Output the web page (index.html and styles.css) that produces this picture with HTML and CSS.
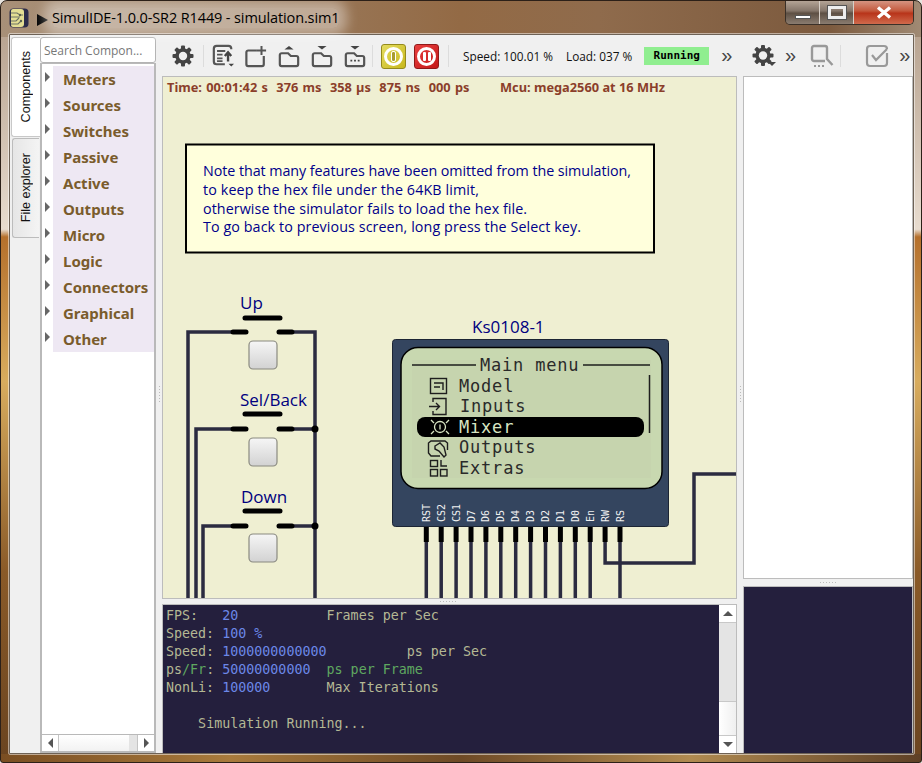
FILE: index.html
```html
<!DOCTYPE html>
<html lang="en">
  <head>
    <meta charset="UTF-8" />
    <title>SimulIDE-1.0.0-SR2 R1449 - simulation.sim1</title>
    <link rel="stylesheet" href="styles.css">
  </head>
  <body>
    <div class="window">
      <header class="titlebar">
        <svg class="app-icon" width="20" height="20" viewBox="0 0 20 20">
          <rect x="0.500" y="0.500" width="19" height="19" rx="4" fill="#2c2c4a"/>
          <path d="M2 3a2 2 0 0 1 2-2h8q3 0 3 3v12q0 3-3 3H4a2 2 0 0 1-2-2z" fill="#e4de94"/>
          <path d="M2 5h6l3 2h3M2 9h9M2 13h5l3-3M2 16h7l3-3" fill="none" stroke="#6e7466" stroke-width="1.100"/>
          <circle cx="11" cy="7" r="1.200" fill="#5a6050"/>
          <circle cx="12" cy="13" r="1.200" fill="#5a6050"/>
        </svg>
        <span class="play"></span>
        <span class="title">SimulIDE-1.0.0-SR2 R1449 - simulation.sim1</span>
        <div class="win-controls">
          <div class="win-btn min"><span class="min-glyph"></span></div>
          <div class="win-btn max"><span class="max-glyph"></span></div>
          <div class="win-btn close">
            <svg width="16" height="13" viewBox="0 0 16 13"><path d="M2 1.500L14 11.500M14 1.500L2 11.500" stroke="#fff" stroke-width="3.400" fill="none"/></svg>
          </div>
        </div>
      </header>

      <div class="client">
        <nav class="side-tabs">
          <div class="side-tab active"><span>Components</span></div>
          <div class="side-tab"><span>File explorer</span></div>
        </nav>

        <aside class="components">
          <input class="search" placeholder="Search Compon..." />
          <div class="tree">
            <ul class="tree-list">
              <li>Meters</li>
              <li>Sources</li>
              <li>Switches</li>
              <li>Passive</li>
              <li>Active</li>
              <li>Outputs</li>
              <li>Micro</li>
              <li>Logic</li>
              <li>Connectors</li>
              <li>Graphical</li>
              <li>Other</li>
            </ul>
            <div class="hscroll">
              <div class="hscroll-btn"><span class="arrow-left"></span></div>
              <div class="hscroll-thumb"></div>
              <div class="hscroll-track"></div>
              <div class="hscroll-btn end"><span class="arrow-right"></span></div>
            </div>
          </div>
        </aside>

        <div class="vsplit"><span class="vdots"></span></div>

        <main class="center">
          <div class="toolbar">
            <svg class="icon first" width="24" height="24" viewBox="0 0 24 24">
              <g fill="#444">
                <rect x="10" y="1.500" width="4" height="21" rx="1"/>
                <rect x="10" y="1.500" width="4" height="21" rx="1" transform="rotate(45 12 12)"/>
                <rect x="10" y="1.500" width="4" height="21" rx="1" transform="rotate(90 12 12)"/>
                <rect x="10" y="1.500" width="4" height="21" rx="1" transform="rotate(135 12 12)"/>
              </g>
              <circle cx="12" cy="12" r="6" fill="none" stroke="#444" stroke-width="3.400"/>
              <circle cx="12" cy="12" r="4.200" fill="#f0f0f0"/>
            </svg>
            <span class="sep"></span>
            <svg class="icon" width="22" height="24" viewBox="0 0 24 24">
              <path d="M21 4.500V4a3 3 0 0 0-3-3H5a3 3 0 0 0-3 3v14a3 3 0 0 0 3 3h9" fill="none" stroke="#555" stroke-width="2.400"/>
              <path d="M5.500 6.500h9M5.500 10.500h6M5.500 14.500h6M5.500 17.500h6" stroke="#555" stroke-width="2"/>
              <path d="M17.500 18V8M14 12l3.500-4 3.500 4" fill="none" stroke="#444" stroke-width="2.600"/>
              <path d="M18 20.500h6l-3 3z" fill="#444"/>
            </svg>
            <svg class="icon" width="22" height="24" viewBox="0 0 24 24">
              <path d="M13 6H3.500A2 2 0 0 0 1.500 8v13a2 2 0 0 0 2 2h15a2 2 0 0 0 2-2v-9" fill="none" stroke="#555" stroke-width="2.400"/>
              <path d="M18 1v10M13 6h10" stroke="#555" stroke-width="2.200"/>
            </svg>
            <svg class="icon" width="22" height="24" viewBox="0 0 24 24">
              <path d="M9 9H4a2 2 0 0 0-2 2v10a2 2 0 0 0 2 2h16a2 2 0 0 0 2-2v-7a2 2 0 0 0-2-2h-6l-3-3z" fill="none" stroke="#555" stroke-width="2.400"/>
              <path d="M12 1l5 4H7z" fill="#444"/>
            </svg>
            <svg class="icon" width="22" height="24" viewBox="0 0 24 24">
              <path d="M9 9H4a2 2 0 0 0-2 2v10a2 2 0 0 0 2 2h16a2 2 0 0 0 2-2v-7a2 2 0 0 0-2-2h-6l-3-3z" fill="none" stroke="#555" stroke-width="2.400"/>
              <path d="M7 1h10l-5 4z" fill="#444"/>
            </svg>
            <svg class="icon last" width="22" height="24" viewBox="0 0 24 24">
              <path d="M9 9H4a2 2 0 0 0-2 2v10a2 2 0 0 0 2 2h16a2 2 0 0 0 2-2v-7a2 2 0 0 0-2-2h-6l-3-3z" fill="none" stroke="#555" stroke-width="2.400"/>
              <path d="M7 1h10l-5 4z" fill="#444"/>
              <path d="M7 17h2M11 17h2M15 17h2" stroke="#444" stroke-width="2"/>
            </svg>
            <span class="sep"></span>
            <div class="power yellow"><span class="ring"><span class="ring-bar"></span></span></div>
            <div class="power red"><span class="ring"><span class="ring-bar"></span><span class="ring-bar"></span></span></div>
            <span class="sep sep-c"></span>
            <span class="stat">Speed: 100.01 %</span>
            <span class="stat load">Load: 037 %</span>
            <span class="badge">Running</span>
            <span class="more">&raquo;</span>
          </div>

          <div class="canvas">
            <svg class="circuit" viewBox="163 77 573 521" width="573" height="521">
              <text class="status time" x="167" y="92">Time: 00:01:42 s&#160;&#160;376 ms&#160;&#160;358 µs&#160;&#160;875 ns&#160;&#160;000 ps</text>
              <text class="status" x="500" y="92">Mcu: mega2560 at 16 MHz</text>

              <rect x="186" y="144.500" width="468" height="108" fill="#ffffdc" stroke="#000" stroke-width="2"/>
              <text class="note" x="203" y="176" textLength="428">Note that many features have been omitted from the simulation,</text>
              <text class="note" x="203" y="195" textLength="276">to keep the hex file under the 64KB limit,</text>
              <text class="note" x="203" y="214" textLength="324">otherwise the simulator fails to load the hex file.</text>
              <text class="note" x="203" y="232" textLength="378">To go back to previous screen, long press the Select key.</text>

              <!-- wires -->
              <g class="wire">
                <path d="M188 598V332H232M294 332H315V598"/>
                <path d="M196 598V429H232M294 429H315"/>
                <path d="M203 598V526H232M294 526H315"/>
                <path d="M426.300 540V598M441.200 540V598M456.100 540V598M471 540V598M485.900 540V598M500.800 540V598M515.700 540V598M530.600 540V598M545.500 540V598M560.400 540V598M575.300 540V598M590.200 540V598M620 540V598"/>
                <path d="M605.100 540V563H694V474H736"/>
              </g>

              <!-- push buttons -->
              <g class="sw">
                <path d="M245 318H280M233 332H246M279 332H292"/>
                <path d="M245 414H280M233 429H246M279 429H292"/>
                <path d="M245 511H280M233 526H246M279 526H292"/>
              </g>
              <circle cx="315" cy="429" r="3.500" fill="#000"/>
              <circle cx="315" cy="526" r="3.500" fill="#000"/>
              <defs>
                <linearGradient id="keyFill" x1="0" y1="0" x2="0" y2="1">
                  <stop offset="0" stop-color="#f6f6f6"/>
                  <stop offset="1" stop-color="#d2d2d2"/>
                </linearGradient>
              </defs>
              <rect class="key" x="249" y="341" width="28" height="28" rx="4"/>
              <rect class="key" x="249" y="438" width="28" height="28" rx="4"/>
              <rect class="key" x="249" y="534" width="28" height="28" rx="4"/>
              <text class="label" x="240" y="309">Up</text>
              <text class="label" x="240" y="406">Sel/Back</text>
              <text class="label" x="241" y="503">Down</text>
              <text class="label" x="472" y="333">Ks0108-1</text>

              <!-- display -->
              <g stroke="#000" stroke-width="5">
                <path d="M426.300 527V542M441.200 527V542M456.100 527V542M471 527V542M485.900 527V542M500.800 527V542M515.700 527V542M530.600 527V542M545.500 527V542M560.400 527V542M575.300 527V542M590.200 527V542M605.100 527V542M620 527V542"/>
              </g>
              <rect x="392.500" y="339.500" width="276" height="187" rx="3" fill="#34455f" stroke="#1c2534"/>
              <rect x="401" y="347.500" width="261" height="141" rx="17" fill="#c8d8b0" stroke="#000" stroke-width="1.500"/>
              <rect x="412" y="360" width="239" height="118" fill="#c6d4ae"/>
              <path d="M412 365H476M583 365H650M649.500 375V433" stroke="#1e1e1e" stroke-width="1.500" fill="none"/>
              <rect x="417" y="417" width="227" height="20" rx="8" fill="#000"/>
              <text class="lcd" x="480" y="371">Main menu</text>
              <text class="lcd" x="459" y="392">Model</text>
              <text class="lcd" x="460" y="412">Inputs</text>
              <text class="lcd inv" x="459" y="433">Mixer</text>
              <text class="lcd" x="459" y="453">Outputs</text>
              <text class="lcd" x="459" y="474">Extras</text>
              <g fill="none" stroke="#1e1e1e" stroke-width="1.400">
                <rect x="430.500" y="378.500" width="16" height="15"/>
                <path d="M434 383H443V390M434 387H440"/>
                <path d="M433 402V398.500H446V414.500H433V411M429 406.500H439M436 403L439.500 406.500L436 410"/>
                <path d="M440 456H431L428.500 453V443L431 441H445L447.500 443V450M435 446L440 443L444 447L446 455L444 457L439 451L435 449Z"/>
                <rect x="430.500" y="460.500" width="7" height="6"/>
                <path d="M441 460V466H447"/>
                <rect x="430.500" y="469.500" width="7" height="6.500"/>
                <rect x="440.500" y="469.500" width="6.500" height="6.500"/>
              </g>
              <g fill="none" stroke="#d8e4c2" stroke-width="1.300">
                <circle cx="440" cy="427" r="5.500"/>
                <path d="M440 424.500V429.500M431 420L434 423M449 420L446 423M431 434L434 431M449 434L446 431"/>
              </g>
              <text class="pin" transform="translate(429.800 522) rotate(-90)">RST</text>
              <text class="pin" transform="translate(444.700 522) rotate(-90)">CS2</text>
              <text class="pin" transform="translate(459.600 522) rotate(-90)">CS1</text>
              <text class="pin" transform="translate(474.500 522) rotate(-90)">D7</text>
              <text class="pin" transform="translate(489.400 522) rotate(-90)">D6</text>
              <text class="pin" transform="translate(504.300 522) rotate(-90)">D5</text>
              <text class="pin" transform="translate(519.200 522) rotate(-90)">D4</text>
              <text class="pin" transform="translate(534.100 522) rotate(-90)">D3</text>
              <text class="pin" transform="translate(549 522) rotate(-90)">D2</text>
              <text class="pin" transform="translate(563.900 522) rotate(-90)">D1</text>
              <text class="pin" transform="translate(578.800 522) rotate(-90)">D0</text>
              <text class="pin" transform="translate(593.700 522) rotate(-90)">En</text>
              <text class="pin" transform="translate(608.600 522) rotate(-90)">RW</text>
              <text class="pin" transform="translate(623.500 522) rotate(-90)">RS</text>
            </svg>
          </div>

          <div class="hsplit"><span class="hdots"></span></div>

          <div class="console-wrap">
            <pre class="console"><span class="k">FPS:</span>   <span class="v">20</span>           <span class="k">Frames per Sec</span>
<span class="k">Speed:</span> <span class="v">100 %</span>
<span class="k">Speed:</span> <span class="v">1000000000000</span>          <span class="k">ps per Sec</span>
<span class="k">ps</span><span class="g">/Fr</span><span class="k">:</span> <span class="v">50000000000</span>  <span class="g">ps per Frame</span>
<span class="k">NonLi:</span> <span class="v">100000</span>       <span class="k">Max Iterations</span>

    <span class="k">Simulation Running...</span></pre>
            <div class="vscroll">
              <div class="vscroll-btn"><span class="arrow-up"></span></div>
              <div class="vscroll-track"></div>
              <div class="vscroll-thumb"></div>
              <div class="vscroll-btn"><span class="arrow-down"></span></div>
            </div>
          </div>
        </main>

        <div class="vsplit"><span class="vdots"></span></div>

        <section class="right">
          <div class="toolbar right-bar">
            <svg class="icon" width="26" height="26" viewBox="0 0 26 26">
              <g fill="#444">
                <rect x="10" y="2" width="4" height="21" rx="1"/>
                <rect x="10" y="2" width="4" height="21" rx="1" transform="rotate(45 12 12.500)"/>
                <rect x="10" y="2" width="4" height="21" rx="1" transform="rotate(90 12 12.500)"/>
                <rect x="10" y="2" width="4" height="21" rx="1" transform="rotate(135 12 12.500)"/>
              </g>
              <circle cx="12" cy="12.500" r="6" fill="none" stroke="#444" stroke-width="3.400"/>
              <circle cx="12" cy="12.500" r="4.200" fill="#f0f0f0"/>
              <path d="M17 19h8l-4 4z" fill="#444"/>
            </svg>
            <span class="more">&raquo;</span>
            <svg class="icon" width="24" height="24" viewBox="0 0 24 24">
              <path d="M15 17H4a2 2 0 0 1-2-2V4a2 2 0 0 1 2-2h11a2 2 0 0 1 2 2v11l5.500 6" fill="none" stroke="#999" stroke-width="2.400"/>
              <path d="M4 22h2M8 22h2M12 22h2" stroke="#999" stroke-width="2"/>
            </svg>
            <span class="sep sep-d"></span>
            <svg class="icon" width="24" height="24" viewBox="0 0 24 24">
              <path d="M22 9v10a3 3 0 0 1-3 3H5a3 3 0 0 1-3-3V5a3 3 0 0 1 3-3h14a3 3 0 0 1 3 3" fill="none" stroke="#999" stroke-width="2.200"/>
              <path d="M7 11l4 5L22 5" fill="none" stroke="#999" stroke-width="2.200"/>
            </svg>
            <span class="more">&raquo;</span>
          </div>
          <div class="white-pane"></div>
          <div class="splitter"><span class="hdots"></span></div>
          <div class="dark-pane"></div>
        </section>
      </div>
    </div>
  </body>
</html>
```

FILE: styles.css
```css
* {
  margin: 0;
  padding: 0;
  box-sizing: border-box;
}
html,
body {
  width: 922px;
  height: 763px;
  overflow: hidden;
  background: #e8e4de;
}
.window {
  width: 922px;
  height: 763px;
  border: 1px solid #2c2018;
  border-radius: 7px 7px 3px 3px;
  display: flex;
  flex-direction: column;
  background:
    linear-gradient(90deg, #a89078 0, #9a7a5c 30%, #936a45 50%, #8f6b4c 65%, #7c5a3e 90%, #a08a74 100%) top / 100% 36px no-repeat,
    linear-gradient(90deg, #7a4e22 0, #a87a3c 25%, #6e4a26 50%, #b08a50 75%, #5e4026 100%) bottom / 100% 8px no-repeat,
    linear-gradient(180deg, #b09a86 0, #e8dccf 30%, #b5702c 31%, #d8ac5e 50%, #8a5a28 75%, #6a4420 100%);
  overflow: hidden;
}

/* title bar */
.titlebar {
  height: 33px;
  flex: none;
  display: flex;
  align-items: flex-start;
  padding-left: 8px;
  position: relative;
}
.app-icon {
  margin-top: 7px;
}
.play {
  width: 0;
  height: 0;
  margin: 13px 0 0 8px;
  border-left: 11px solid #000;
  border-top: 6px solid transparent;
  border-bottom: 6px solid transparent;
}
.title {
  margin: 7px 0 0 4px;
  font: 14.500px/20px "Open Sans", sans-serif;
  letter-spacing: -0.120px;
  color: #000;
  background: rgba(255, 255, 255, 0.38);
  box-shadow: 0 0 12px 8px rgba(255, 255, 255, 0.38);
  border-radius: 6px;
}
.win-controls {
  margin-left: auto;
  margin-right: 7px;
  margin-top: -1px;
  display: flex;
  height: 25px;
  border: 1px solid #3a3028;
  border-top: none;
  border-radius: 0 0 5px 5px;
  overflow: hidden;
}
.win-btn {
  display: flex;
  align-items: center;
  justify-content: center;
  width: 34px;
  background: linear-gradient(180deg, #b8a89a 0, #85766a 45%, #5e5044 55%, #8a7c70 100%);
  border-right: 1px solid #d8d0c8;
}
.win-btn.close {
  width: 59px;
  border-right: none;
  background: linear-gradient(180deg, #d89a88 0, #c45a3e 45%, #b8341a 55%, #d06a4c 100%);
}
.min-glyph {
  width: 16px;
  height: 4px;
  margin-top: 10px;
  background: #fff;
  border: 1px solid #555;
}
.max-glyph {
  width: 18px;
  height: 13px;
  background: transparent;
  border: 3px solid #eee;
  outline: 1px solid #555;
}

/* client area */
.client {
  flex: 1;
  margin: 0 7px 8px 8px;
  display: flex;
  background: #f0f0f0;
  border: 1px solid #6e6256;
  border-radius: 1px;
  min-height: 0;
  outline: 1px solid rgba(255, 255, 255, 0.5);
}
.side-tabs {
  width: 30px;
  flex: none;
  padding-top: 2px;
  padding-left: 1px;
  display: flex;
  flex-direction: column;
  gap: 1px;
}
.side-tab {
  width: 27px;
  height: 100px;
  margin-left: 1px;
  background: linear-gradient(90deg, #e6e6e6, #f4f4f4);
  border: 1px solid #bcbcbc;
  border-right: none;
  border-radius: 3px 0 0 3px;
  display: flex;
  align-items: center;
  justify-content: center;
}
.side-tab.active {
  width: 29px;
  margin-left: 0;
  background: #fff;
  border-color: #c8c8c8;
}
.side-tab span {
  writing-mode: vertical-rl;
  transform: rotate(180deg);
  font: 12.600px "Liberation Sans", Arial, sans-serif;
  color: #111;
}
.components {
  width: 116px;
  flex: none;
  padding-top: 2px;
  display: flex;
  flex-direction: column;
}
.search {
  height: 26px;
  width: 116px;
  flex: none;
  border: 1px solid #b4b4b4;
  border-radius: 3px;
  padding: 0 3px;
  background: #fff;
  font: 12px "Open Sans", sans-serif;
  outline: none;
}
.search::placeholder {
  color: #777;
  opacity: 1;
}
.tree {
  flex: 1;
  border: 2px solid #b9b9b9;
  border-top: 1px solid #b9b9b9;
  background: #fff;
  display: flex;
  flex-direction: column;
}
.tree-list {
  list-style: none;
  flex: 1;
  padding-top: 2px;
}
.tree-list li {
  position: relative;
  height: 26px;
  margin-left: 11px;
  padding-left: 10px;
  background: #eee8f3;
  font: bold 15px/26px "Noto Sans", sans-serif;
  color: #7a5c2c;
}
.tree-list li::before {
  content: "";
  position: absolute;
  left: -8px;
  top: 6px;
  border-left: 5px solid #666;
  border-top: 5px solid transparent;
  border-bottom: 5px solid transparent;
}
.hscroll {
  height: 17px;
  flex: none;
  display: flex;
  border-top: 1px solid #b9b9b9;
}
.hscroll-btn {
  width: 17px;
  flex: none;
  display: flex;
  align-items: center;
  justify-content: center;
  border-right: 1px solid #c4c4c4;
}
.hscroll-btn.end {
  border-right: none;
  border-left: 1px solid #c4c4c4;
}
.hscroll-thumb {
  flex: 1;
  background: linear-gradient(180deg, #fff, #f2f2f2);
}
.hscroll-track {
  width: 8px;
  background: #e4e4e4;
}
.arrow-left {
  border-right: 5px solid #555;
  border-top: 5px solid transparent;
  border-bottom: 5px solid transparent;
}
.arrow-right {
  border-left: 5px solid #555;
  border-top: 5px solid transparent;
  border-bottom: 5px solid transparent;
}
.arrow-up {
  border-bottom: 5px solid #555;
  border-left: 5px solid transparent;
  border-right: 5px solid transparent;
}
.arrow-down {
  border-top: 5px solid #555;
  border-left: 5px solid transparent;
  border-right: 5px solid transparent;
}

/* splitter handles */
.vsplit {
  width: 6px;
  flex: none;
  display: flex;
  align-items: center;
  justify-content: center;
  padding-top: 0;
}
.vdots {
  width: 1px;
  height: 16px;
  background: repeating-linear-gradient(180deg, #bbb 0 1px, transparent 1px 3px);
}
.hdots {
  width: 16px;
  height: 1px;
  background: repeating-linear-gradient(90deg, #bbb 0 1px, transparent 1px 3px);
}

/* center column */
.center {
  width: 575px;
  flex: none;
  display: flex;
  flex-direction: column;
}
.toolbar {
  height: 41px;
  flex: none;
  display: flex;
  align-items: center;
  padding-top: 1px;
}
.icon {
  flex: none;
  margin-right: 11px;
}
.icon.first {
  margin-left: 9px;
  margin-right: 8px;
}
.icon.last {
  margin-right: 6px;
}
.sep {
  width: 1px;
  height: 22px;
  flex: none;
  background: #dcdcdc;
  margin-right: 8px;
}
.sep-c {
  margin: 0 14px 0 9px;
}
.sep-d {
  margin: 0 24px 0 6px;
}
.power {
  width: 25px;
  height: 25px;
  flex: none;
  margin-right: 8px;
  border-radius: 3px;
  display: flex;
  align-items: center;
  justify-content: center;
}
.power.yellow {
  background: linear-gradient(135deg, #e4dc60, #c8b81c);
  border: 1px solid #948a1c;
}
.power.red {
  margin-right: 0;
  background: linear-gradient(135deg, #e84040, #c41818);
  border: 1px solid #901818;
}
.ring {
  width: 19px;
  height: 19px;
  border: 3px solid #fff;
  border-radius: 50%;
  display: flex;
  align-items: center;
  justify-content: center;
  gap: 2px;
}
.ring-bar {
  width: 3px;
  height: 9px;
  background: #fff;
  border-radius: 1px;
}
.yellow .ring-bar {
  background: #a89c30;
  outline: 1px solid #fff;
}
.stat {
  font: 11.800px "Open Sans", sans-serif;
  color: #111;
  white-space: nowrap;
}
.stat.load {
  margin-left: 13px;
}
.badge {
  width: 65px;
  height: 18px;
  margin-left: 12px;
  background: #90ee90;
  font: bold 11px/18px "DejaVu Sans Mono", monospace;
  text-align: center;
  color: #000;
}
.more {
  font: 20px/16px "Liberation Sans", sans-serif;
  color: #444;
  margin-left: 12px;
  margin-top: -3px;
}
.canvas {
  height: 523px;
  flex: none;
  border: 1px solid #bcbcbc;
  background: #efefd2;
  overflow: hidden;
}
.circuit {
  display: block;
}
.status {
  font: bold 12.800px "Noto Sans", sans-serif;
  fill: #8b3e2a;
}
.status.time {
  word-spacing: 0.900px;
}
.note {
  font: 14.300px "Open Sans", sans-serif;
  fill: #00008b;
}
.label {
  font: 17px "Open Sans", sans-serif;
  fill: #00007f;
}
.wire path {
  fill: none;
  stroke: #2b2b40;
  stroke-width: 3.500;
}
.sw path {
  fill: none;
  stroke: #000;
  stroke-width: 5;
  stroke-linecap: round;
}
.key {
  fill: url(#keyFill);
  stroke: #8a8a80;
  stroke-width: 1.200;
}
.lcd {
  font: 17px "DejaVu Sans Mono", monospace;
  letter-spacing: 0.800px;
  fill: #2a2a2a;
}
.lcd.inv {
  fill: #d8e4c2;
}
.pin {
  font: 10px "DejaVu Sans Mono", monospace;
  fill: #f0f0f0;
}
.hsplit {
  height: 5px;
  flex: none;
  display: flex;
  align-items: center;
  justify-content: center;
  padding-right: 4px;
}
.console-wrap {
  flex: 1;
  min-height: 0;
  display: flex;
  border: 1px solid #bcbcbc;
  border-bottom: none;
  background: #241f3d;
}
.console {
  flex: 1;
  padding: 2px 0 0 3px;
  font: 13.330px/18px "DejaVu Sans Mono", monospace;
}
.console .k {
  color: #b4b894;
}
.console .v {
  color: #6c88e8;
}
.console .g {
  color: #5fa860;
}
.vscroll {
  width: 17px;
  flex: none;
  display: flex;
  flex-direction: column;
  background: #f4f4f4;
}
.vscroll-btn {
  height: 17px;
  flex: none;
  display: flex;
  align-items: center;
  justify-content: center;
  background: #fff;
}
.vscroll-track {
  height: 80px;
  flex: none;
  background: #e4e4e4;
  border-top: 1px solid #c8c8c8;
  border-bottom: 1px solid #c8c8c8;
}
.vscroll-thumb {
  flex: 1;
  background: linear-gradient(90deg, #fff, #efefef);
  border-bottom: 1px solid #c8c8c8;
}

/* right column */
.right {
  flex: 1;
  min-width: 0;
  display: flex;
  flex-direction: column;
}
.right-bar {
  padding-left: 8px;
}
.right-bar .icon {
  margin-right: 0;
}
.right-bar .more {
  margin: -3px 14px 0 8px;
}
.right-bar .icon + .sep + .icon + .more {
  margin-left: 10px;
  margin-right: 0;
}
.white-pane {
  height: 503px;
  flex: none;
  background: #fff;
  border: 1px solid #bcbcbc;
}
.splitter {
  height: 7px;
  flex: none;
  display: flex;
  align-items: center;
  justify-content: center;
}
.dark-pane {
  flex: 1;
  background: #241f3d;
  border: 1px solid #bcbcbc;
  border-bottom: none;
}
```
